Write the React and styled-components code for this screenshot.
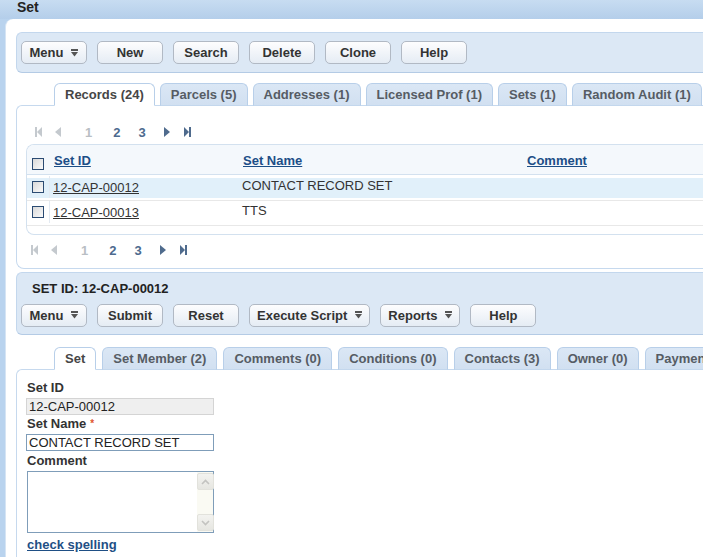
import React from "react"
import styled, { createGlobalStyle } from "styled-components"

const GlobalStyle = createGlobalStyle`
  html, body { margin: 0; padding: 0; }
  body {
    font-family: "Liberation Sans", Arial, sans-serif;
    font-size: 13px;
    color: #333;
    overflow: hidden;
  }
`

const Page = styled.div`
  width: 703px;
  height: 557px;
  display: flex;
  flex-direction: column;
  overflow: hidden;
  background: #b9d3ee;
`

const TitleBar = styled.div`
  height: 19px;
  flex: none;
  padding-left: 17px;
  font-size: 14px;
  font-weight: bold;
  line-height: 15px;
  color: #222;
  background: linear-gradient(#c7dcf1, #b4ceea);
`

const Main = styled.div`
  flex: 1;
  min-height: 0;
  margin-left: 5px;
  background: #fff;
  border-top-left-radius: 8px;
  border-left: 1px solid #d5e4f4;
  padding: 13px 0 0 10px;
  display: flex;
  flex-direction: column;
  overflow: hidden;
`

const BluePanel = styled.div`
  flex: none;
  background: #dce8f5;
  border: 1px solid #c3d7ed;
  border-bottom-color: #b4cbe5;
  border-right: none;
  border-radius: 6px 0 0 6px;
`

const Toolbar = styled.div`
  display: flex;
  align-items: center;
  gap: 10px;
  height: ${(p) => p.$h || 39}px;
  padding-left: 4px;
`

const SectionTitle = styled.div`
  padding: 8px 0 0 15px;
  font-weight: bold;
  line-height: 15px;
  color: #222;
`

const Button = styled.button`
  height: 23px;
  min-width: 66px;
  padding: 0 7px;
  display: inline-flex;
  align-items: center;
  justify-content: center;
  gap: 8px;
  font-family: inherit;
  font-size: 13px;
  font-weight: bold;
  color: #333;
  background: linear-gradient(#fdfdfe, #e5ecf4);
  border: 1px solid #b1b9c4;
  border-radius: 5px;
  white-space: nowrap;
`

const DropIcon = () => (
  <svg width="7" height="8" viewBox="0 0 7 8">
    <rect x="0" y="0" width="7" height="2" fill="#555" />
    <polygon points="0,3 7,3 3.5,7.5" fill="#555" />
  </svg>
)

const TabRow = styled.div`
  display: flex;
  gap: ${(p) => p.$gap || 5}px;
  padding-left: 38px;
  margin-top: ${(p) => p.$mt || 10}px;
  margin-bottom: -1px;
  position: relative;
  z-index: 1;
  white-space: nowrap;
`

const Tab = styled.div`
  flex: none;
  height: 21px;
  line-height: 21px;
  padding: 0 10px;
  font-weight: bold;
  color: ${(p) => (p.$active ? "#464646" : "#565c64")};
  background: ${(p) => (p.$active ? "#fff" : "linear-gradient(#dbe7f5, #d1e0f1)")};
  border: 1px solid #b8cfe9;
  border-bottom: 1px solid ${(p) => (p.$active ? "#fff" : "#c3d7ed")};
  border-radius: 6px 6px 0 0;
`

const ContentPanel = styled.div`
  flex: none;
  background: #fff;
  border: 1px solid #c6d9ee;
  border-right: none;
  border-radius: 6px 0 0 8px;
  padding: 0 0 10px 9px;
  margin-bottom: 3px;
`

const Pager = styled.div`
  display: flex;
  align-items: center;
  height: 16px;
  margin-top: ${(p) => p.$mt}px;
  padding-left: ${(p) => p.$pl}px;
`

const PagerItem = styled.span`
  display: inline-flex;
  margin-left: ${(p) => p.$ml || 0}px;
  font-weight: bold;
  font-size: 13px;
  color: ${(p) => (p.$off ? "#b9bec4" : "#4d6a8e")};
`

const PagerIcon = ({ kind, off }) => {
  const c = off ? "#c4c9ce" : "#4f6b8d"
  if (kind === "first")
    return (
      <svg width="7" height="10" viewBox="0 0 7 10">
        <rect x="0" y="0" width="2" height="10" fill={c} />
        <polygon points="7,0 7,10 2,5" fill={c} />
      </svg>
    )
  if (kind === "prev")
    return (
      <svg width="6" height="10" viewBox="0 0 6 10">
        <polygon points="6,0 6,10 0,5" fill={c} />
      </svg>
    )
  if (kind === "next")
    return (
      <svg width="6" height="10" viewBox="0 0 6 10">
        <polygon points="0,0 0,10 6,5" fill={c} />
      </svg>
    )
  return (
    <svg width="7" height="10" viewBox="0 0 7 10">
      <polygon points="0,0 0,10 5,5" fill={c} />
      <rect x="5" y="0" width="2" height="10" fill={c} />
    </svg>
  )
}

const PagerBar = ({ mt, pl }) => (
  <Pager $mt={mt} $pl={pl}>
    <PagerItem $off><PagerIcon kind="first" off /></PagerItem>
    <PagerItem $off $ml={13}><PagerIcon kind="prev" off /></PagerItem>
    <PagerItem $off $ml={24}>1</PagerItem>
    <PagerItem $ml={21}>2</PagerItem>
    <PagerItem $ml={18}>3</PagerItem>
    <PagerItem $ml={18}><PagerIcon kind="next" /></PagerItem>
    <PagerItem $ml={14}><PagerIcon kind="last" /></PagerItem>
  </Pager>
)

const Table = styled.div`
  margin-top: 4px;
  border: 1px solid #d3e1ef;
  border-right: none;
  border-radius: 8px 0 0 8px;
  overflow: hidden;
`

const cols = "22px 189px 284px 1fr"

const HeadRow = styled.div`
  display: grid;
  grid-template-columns: ${cols};
  height: 29px;
  background: #f4f8fc;
  border-bottom: 1px solid #d3e1ef;
`

const HeadCell = styled.div`
  display: flex;
  align-items: ${(p) => (p.$box ? "flex-end" : "center")};
  justify-content: ${(p) => (p.$box ? "center" : "flex-start")};
  padding: ${(p) => (p.$box ? "0 0 4px" : "2px 0 0 5px")};
`

const HeadLink = styled.a`
  font-weight: bold;
  color: #1c4e87;
  text-decoration: underline;
`

const TBody = styled.div`
  padding: 1px 0 8px;
`

const Row = styled.div`
  display: grid;
  grid-template-columns: ${cols};
  height: 24px;
  border-bottom: 1px solid #e8e8e8;
  background: ${(p) => (p.$selected ? "linear-gradient(#fff 0 2px, #e1f0fa 2px 22px, #fff 22px)" : "#fff")};
`

const Cell = styled.div`
  display: flex;
  align-items: center;
  height: 22px;
  padding-left: ${(p) => p.$pl || 0}px;
  border-left: ${(p) => (p.$sep ? "1px solid #e3eaf2" : "none")};
  justify-content: ${(p) => (p.$box ? "center" : "flex-start")};
  white-space: nowrap;
`

const NameText = styled.span`
  margin-bottom: 4px;
  color: #333;
`

const IdLink = styled.a`
  color: #333;
  text-decoration: underline;
  margin-top: 1px;
`

const Check = styled.span`
  display: inline-block;
  width: 10px;
  height: 10px;
  border: 1px solid #2b4b72;
  background: linear-gradient(135deg, #d9d9d9, #fafafa);
`

const FormPanel = styled.div`
  flex: 1;
  background: #fff;
  border: 1px solid #c6d9ee;
  border-right: none;
  border-bottom: none;
  border-radius: 6px 0 0 0;
  padding: 10px 0 0 9px;
  display: flex;
  flex-direction: column;
  align-items: flex-start;
`

const Label = styled.div`
  padding-left: 1px;
  font-weight: bold;
  line-height: 15px;
  color: #333;
  margin-top: ${(p) => p.$mt || 0}px;
`

const Req = styled.span`
  color: #e0542e;
  font-size: 10px;
  margin-left: 4px;
  vertical-align: top;
`

const TextInput = styled.input`
  box-sizing: border-box;
  width: 188px;
  height: 17px;
  margin: 3px 0 0;
  padding: 0 2px;
  font-family: inherit;
  font-size: 13px;
  color: #222;
  background: ${(p) => (p.readOnly ? "#efefef" : "#fff")};
  border: 1px solid ${(p) => (p.readOnly ? "#d4d4d4" : "#7f9db9")};
  outline: none;
`

const AreaBox = styled.div`
  box-sizing: border-box;
  display: flex;
  width: 187px;
  height: 62px;
  margin: 3px 0 0 1px;
  border: 1px solid #7f9db9;
  background: #fff;
`

const Area = styled.textarea`
  flex: 1;
  border: none;
  resize: none;
  outline: none;
  padding: 2px;
  font-family: inherit;
  font-size: 13px;
  overflow: hidden;
`

const ScrollTrack = styled.div`
  width: 16px;
  display: flex;
  flex-direction: column;
  justify-content: space-between;
  padding: 1px 0;
  background: #fafaf3;
`

const ScrollBtn = styled.div`
  width: 15px;
  height: 15px;
  display: flex;
  align-items: center;
  justify-content: center;
  background: linear-gradient(#f3f3f0, #e6e6e1);
  border: 1px solid #e2e2dc;
  border-radius: 2px;
`

const Chevron = ({ up }) => (
  <svg width="9" height="6" viewBox="0 0 9 6">
    <polyline
      points={up ? "1,5 4.5,1.5 8,5" : "1,1 4.5,4.5 8,1"}
      fill="none"
      stroke="#c3c3c0"
      strokeWidth="1.6"
    />
  </svg>
)

const SpellLink = styled.a`
  margin: 4px 0 0 1px;
  font-weight: bold;
  color: #1f4f85;
  text-decoration: underline;
`

const topTabs = ["Records (24)", "Parcels (5)", "Addresses (1)", "Licensed Prof (1)", "Sets (1)", "Random Audit (1)"]
const formTabs = ["Set", "Set Member (2)", "Comments (0)", "Conditions (0)", "Contacts (3)", "Owner (0)", "Payments (0)"]

const rows = [
  { id: "12-CAP-00012", name: "CONTACT RECORD SET", selected: true },
  { id: "12-CAP-00013", name: "TTS" },
]

export default function App() {
  return (
    <Page>
      <GlobalStyle />
      <TitleBar>Set</TitleBar>
      <Main>
        <BluePanel>
          <Toolbar>
            <Button>Menu <DropIcon /></Button>
            <Button>New</Button>
            <Button>Search</Button>
            <Button>Delete</Button>
            <Button>Clone</Button>
            <Button>Help</Button>
          </Toolbar>
        </BluePanel>

        <TabRow $gap={5} $mt={10}>
          {topTabs.map((t, i) => (
            <Tab key={t} $active={i === 0}>{t}</Tab>
          ))}
        </TabRow>
        <ContentPanel>
          <PagerBar mt={18} pl={9} />
          <Table>
            <HeadRow>
              <HeadCell $box><Check /></HeadCell>
              <HeadCell><HeadLink>Set ID</HeadLink></HeadCell>
              <HeadCell><HeadLink>Set Name</HeadLink></HeadCell>
              <HeadCell><HeadLink>Comment</HeadLink></HeadCell>
            </HeadRow>
            <TBody>
              {rows.map((r) => (
                <Row key={r.id} $selected={r.selected}>
                  <Cell $box><Check /></Cell>
                  <Cell $sep $pl={3}><IdLink>{r.id}</IdLink></Cell>
                  <Cell $pl={4}><NameText>{r.name}</NameText></Cell>
                  <Cell />
                </Row>
              ))}
            </TBody>
          </Table>
          <PagerBar mt={7} pl={5} />
        </ContentPanel>

        <BluePanel>
          <SectionTitle>SET ID: 12-CAP-00012</SectionTitle>
          <Toolbar $h={38}>
            <Button>Menu <DropIcon /></Button>
            <Button>Submit</Button>
            <Button>Reset</Button>
            <Button>Execute Script <DropIcon /></Button>
            <Button>Reports <DropIcon /></Button>
            <Button>Help</Button>
          </Toolbar>
        </BluePanel>

        <TabRow $gap={6} $mt={12}>
          {formTabs.map((t, i) => (
            <Tab key={t} $active={i === 0}>{t}</Tab>
          ))}
        </TabRow>
        <FormPanel>
          <Label>Set ID</Label>
          <TextInput readOnly value="12-CAP-00012" />
          <Label $mt={1}>Set Name<Req>*</Req></Label>
          <TextInput defaultValue="CONTACT RECORD SET" />
          <Label $mt={2}>Comment</Label>
          <AreaBox>
            <Area />
            <ScrollTrack>
              <ScrollBtn><Chevron up /></ScrollBtn>
              <ScrollBtn><Chevron /></ScrollBtn>
            </ScrollTrack>
          </AreaBox>
          <SpellLink>check spelling</SpellLink>
        </FormPanel>
      </Main>
    </Page>
  )
}
